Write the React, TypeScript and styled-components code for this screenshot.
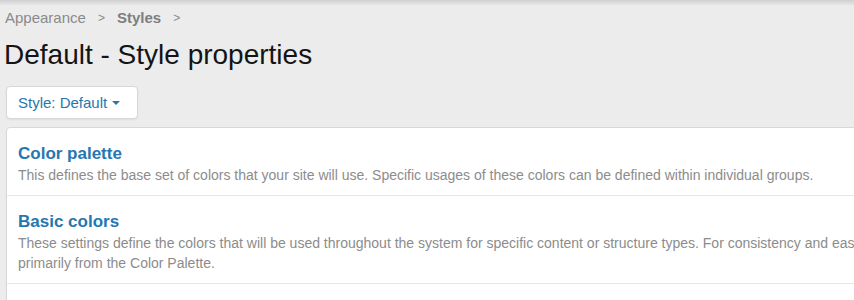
import React from 'react'
import styled, { createGlobalStyle } from 'styled-components'

const colors = {
  page: '#ececec',
  white: '#ffffff',
  border: '#d8d8d8',
  divider: '#e6e6e6',
  blue: '#2577b1',
  title: '#141414',
  muted: '#8c8c8c',
  crumb: '#8a8a8a',
}

const GlobalStyle = createGlobalStyle`
  html, body {
    margin: 0;
    padding: 0;
    background: ${colors.page};
    overflow: hidden;
  }
  body {
    font-family: "Liberation Sans", Arial, Helvetica, sans-serif;
  }
`

const TopShade = styled.div`
  height: 6px;
  background: linear-gradient(to bottom, #cfcfcf, ${colors.page});
`

const Main = styled.div`
  padding: 0 0 0 6px;
`

const Breadcrumbs = styled.ul`
  display: flex;
  align-items: center;
  list-style: none;
  margin: 2px 0 0 -1px;
  padding: 0;
  font-size: 15px;
  line-height: 20px;
  color: ${colors.crumb};
`

const Crumb = styled.li<{ strong?: boolean }>`
  display: flex;
  align-items: center;
  font-weight: ${({ strong }) => (strong ? 700 : 400)};
  color: ${({ strong }) => (strong ? '#7e7e7e' : colors.crumb)};

  &::after {
    content: '>';
    font-weight: 400;
    font-size: 12px;
    margin: 0 12px 0 12px;
    color: ${colors.crumb};
  }
`

const PageTitle = styled.h1`
  margin: 10px 0 0 -2px;
  font-size: 28px;
  line-height: 34px;
  font-weight: 400;
  color: ${colors.title};
`

const MenuButton = styled.button`
  display: inline-flex;
  align-items: center;
  height: 33px;
  margin-top: 14px;
  padding: 0 17px 0 11px;
  background: ${colors.white};
  border: 1px solid ${colors.border};
  border-radius: 4px;
  box-shadow: 0 1px 2px rgba(0, 0, 0, 0.06);
  font-family: inherit;
  font-size: 15px;
  color: ${colors.blue};
  cursor: pointer;
`

const Caret = styled.span`
  width: 0;
  height: 0;
  margin-left: 5px;
  border-left: 4px solid transparent;
  border-right: 4px solid transparent;
  border-top: 4px solid ${colors.blue};
`

const ButtonRow = styled.div`
  display: flex;
`

const Panel = styled.div`
  width: 1190px;
  margin-top: 8px;
  background: ${colors.white};
  border: 1px solid ${colors.border};
  border-radius: 4px 0 0 0;
  box-shadow: 0 1px 2px rgba(0, 0, 0, 0.04);
`

const PanelRow = styled.div`
  padding: 15px 12px 10px 11px;
  border-bottom: 1px solid ${colors.divider};
`

const RowTitle = styled.a`
  display: block;
  font-size: 17px;
  line-height: 22px;
  font-weight: 700;
  color: ${colors.blue};
  text-decoration: none;
`

const RowText = styled.div`
  font-size: 14px;
  line-height: 20px;
  color: ${colors.muted};
`

const groups = [
  {
    title: 'Color palette',
    text: 'This defines the base set of colors that your site will use. Specific usages of these colors can be defined within individual groups.',
  },
  {
    title: 'Basic colors',
    text: 'These settings define the colors that will be used throughout the system for specific content or structure types. For consistency and ease of maintenance, these colors should be derived primarily from the Color Palette.',
  },
  {
    title: 'Basic typography',
    text: 'These settings control the basic typography used throughout the system.',
  },
]

const App: React.FC = () => (
  <>
    <GlobalStyle />
    <TopShade />
    <Main>
      <Breadcrumbs>
        <Crumb>Appearance</Crumb>
        <Crumb strong>Styles</Crumb>
      </Breadcrumbs>
      <PageTitle>Default - Style properties</PageTitle>
      <ButtonRow>
        <MenuButton>
          Style: Default
          <Caret />
        </MenuButton>
      </ButtonRow>
      <Panel>
        {groups.map(group => (
          <PanelRow key={group.title}>
            <RowTitle href="#">{group.title}</RowTitle>
            <RowText>{group.text}</RowText>
          </PanelRow>
        ))}
      </Panel>
    </Main>
  </>
)

export default App
